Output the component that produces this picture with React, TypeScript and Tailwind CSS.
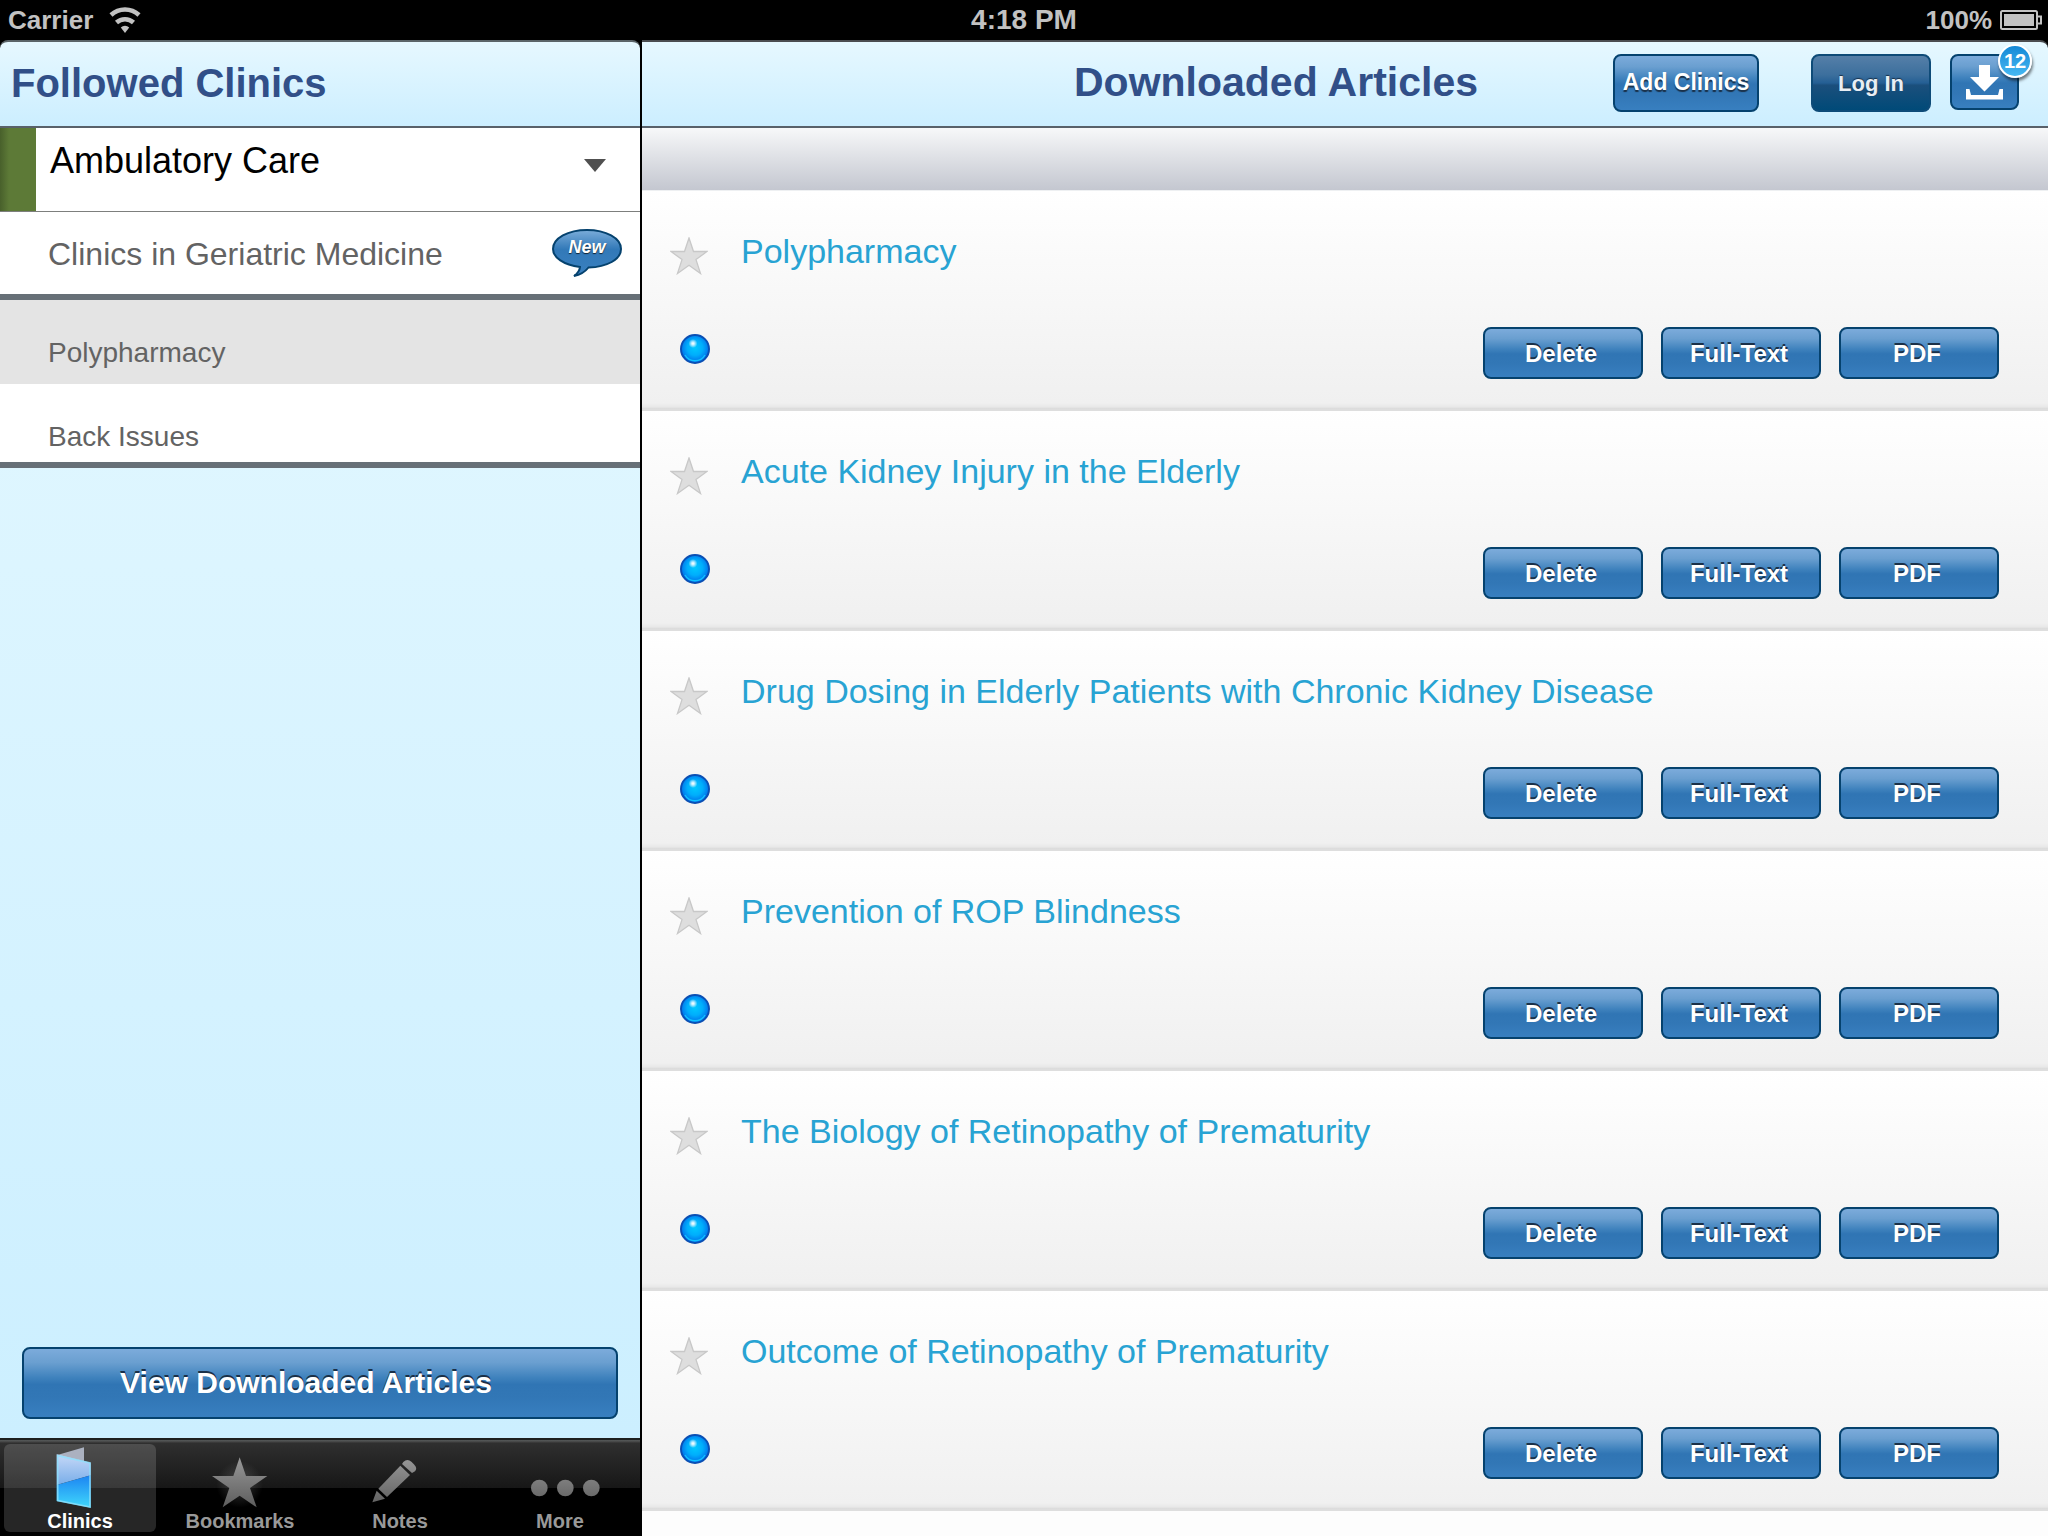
import React from "react";

const glossy =
  "border-2 border-[#05426e] bg-[linear-gradient(180deg,#7cabdb_0%,#6a9fd0_20%,#3f82bd_42%,#3075b4_52%,#3277b6_72%,#387fc0_100%)] font-bold text-white";

const articles = [
  "Polypharmacy",
  "Acute Kidney Injury in the Elderly",
  "Drug Dosing in Elderly Patients with Chronic Kidney Disease",
  "Prevention of ROP Blindness",
  "The Biology of Retinopathy of Prematurity",
  "Outcome of Retinopathy of Prematurity",
];

function WifiIcon() {
  return (
    <svg width="32" height="28" viewBox="0 0 32 28" fill="none" stroke="#c2c2c2" aria-hidden="true">
      <path d="M2 9a20.500 20.500 0 0 1 28 0" strokeWidth="4.500" />
      <path d="M7.500 16.500a12.500 12.500 0 0 1 17 0" strokeWidth="4.500" />
      <path d="M16 27l-4.200-5.600a6 6 0 0 1 8.400 0z" fill="#c2c2c2" stroke="none" />
    </svg>
  );
}

function BatteryIcon() {
  return (
    <svg width="42" height="20" viewBox="0 0 42 20" fill="none" aria-hidden="true">
      <rect x="1" y="1" width="36" height="18" rx="1.500" stroke="#c2c2c2" strokeWidth="2" />
      <rect x="4" y="4" width="30" height="12" fill="#c2c2c2" />
      <path d="M37 6.500h4v7h-4" stroke="#c2c2c2" strokeWidth="2" />
    </svg>
  );
}

function StatusBar() {
  return (
    <div className="grid h-10 shrink-0 grid-cols-3 items-center bg-black text-[26px] leading-7 font-bold text-[#c2c2c2]">
      <div className="flex items-center gap-4 pl-2">
        <span>Carrier</span>
        <WifiIcon />
      </div>
      <div className="text-center text-[28px]">4:18 PM</div>
      <div className="flex items-center justify-end gap-2 pr-1.5">
        <span>100%</span>
        <BatteryIcon />
      </div>
    </div>
  );
}

function NewBubble() {
  return (
    <span className="relative h-12 w-[70px] shrink-0">
      <svg className="absolute inset-0" width="70" height="48" viewBox="0 0 70 48" aria-hidden="true">
        <defs>
          <linearGradient id="bubble" x1="0" y1="0" x2="0" y2="1">
            <stop offset="0" stopColor="#7badda" />
            <stop offset="0.42" stopColor="#3279b8" />
            <stop offset="1" stopColor="#3a80c0" />
          </linearGradient>
        </defs>
        <path
          d="M35 1C16 1 1 9.300 1 20c0 8.500 10.500 15.800 27 18-.4 3.600-2.500 6.600-6 9 6.500-1.200 11.200-4.300 14.500-8.500C55 38 69 30.500 69 20 69 9.300 54 1 35 1z"
          fill="url(#bubble)"
          stroke="#05426e"
          strokeWidth="2"
        />
      </svg>
      <span className="relative block pt-2 text-center text-[18px] leading-5 font-bold text-white italic [text-shadow:0_1px_1px_#123]">
        New
      </span>
    </span>
  );
}

const tabViews: Record<string, string> = {
  Clinics: "120 24 240 192",
  Bookmarks: "600 24 240 192",
  Notes: "120 24 240 192",
  More: "600 24 240 192",
};

function TabIcon({ name }: { name: string }) {
  return (
    <svg className="shrink-0" width="80" height="64" viewBox={tabViews[name]} aria-hidden="true">
      <defs>
        <linearGradient id="tabGrey" gradientUnits="userSpaceOnUse" x1="0" y1="60" x2="0" y2="216">
          <stop offset="0" stopColor="#9a9a9a" />
          <stop offset="1" stopColor="#5c5c5c" />
        </linearGradient>
        <linearGradient id="folderTop" x1="0" y1="0" x2="0" y2="1">
          <stop offset="0" stopColor="#c5d8f8" />
          <stop offset="1" stopColor="#78ade8" />
        </linearGradient>
        <linearGradient id="folderBottom" x1="0" y1="0" x2="0" y2="1">
          <stop offset="0" stopColor="#1c84f2" />
          <stop offset="1" stopColor="#40d8fb" />
        </linearGradient>
        <radialGradient id="starGlow">
          <stop offset="0" stopColor="#888" stopOpacity="0.4" />
          <stop offset="1" stopColor="#888" stopOpacity="0" />
        </radialGradient>
      </defs>
      {name === "Clinics" && (
        <g>
          <path d="M172 57L252 34V76L190 62z" fill="#abb1c0" />
          <path d="M170 55L272 80V118L170 147z" fill="url(#folderTop)" />
          <path d="M170 147L272 118V215L170 195z" fill="url(#folderBottom)" />
          <path d="M173 59V194L270 213V81z" fill="none" stroke="#8fe0fb" strokeWidth="5" strokeOpacity="0.8" />
        </g>
      )}
      {name === "Bookmarks" && (
        <g>
          <circle cx="719" cy="145" r="70" fill="url(#starGlow)" />
          <path
            d="M719 64L738 120H802L750 156L770 214L719 179L668 214L688 156L636 120H700z"
            fill="url(#tabGrey)"
          />
        </g>
      )}
      {name === "Notes" && (
        <g fill="url(#tabGrey)">
          <path d="M250 78Q262 66 275 78L283 86Q293 96 285 106L276 111L246 84z" />
          <path d="M241 89L270 117L201 183L175 158z" />
          <path d="M170 164L195 188L157 199z" />
        </g>
      )}
      {name === "More" && (
        <g fill="url(#tabGrey)">
          <circle cx="658" cy="156" r="25" />
          <circle cx="736" cy="156" r="25" />
          <circle cx="814" cy="156" r="25" />
        </g>
      )}
    </svg>
  );
}

function TabBar() {
  return (
    <nav className="grid shrink-0 grid-cols-4 border-t-2 border-[#1c1f1f] bg-[linear-gradient(180deg,#565a5a_0px,#444_2px,#2f2f2f_3px,#171717_48px,#000_48px)] pt-1 pb-1">
      {["Clinics", "Bookmarks", "Notes", "More"].map((name, i) => (
        <button
          key={name}
          className={
            i === 0
              ? "mx-1 flex h-[88px] flex-col items-center rounded-md bg-white/15 text-white"
              : "mx-1 flex h-[88px] flex-col items-center rounded-md text-[#999]"
          }
        >
          <TabIcon name={name} />
          <span className="pt-px text-[20px] leading-6 font-bold">{name}</span>
        </button>
      ))}
    </nav>
  );
}

function Sidebar() {
  return (
    <aside className="flex w-[642px] shrink-0 flex-col border-r-2 border-black bg-black">
      <header className="flex h-[88px] shrink-0 items-center rounded-t-lg border-y-2 border-t-[#5b6468] border-b-[#59616a] bg-linear-to-b from-[#e6f8ff] to-[#cceeff] pb-0.5 pl-[11px]">
        <h1 className="text-[40px] leading-12 font-bold text-[#314f88]">Followed Clinics</h1>
      </header>
      <div className="flex min-h-0 flex-1 flex-col bg-linear-to-b from-[#e4f8ff] to-[#ccefff]">
        <button className="flex h-[84px] shrink-0 border-b border-[#7d7f7d] bg-white text-left">
          <span className="w-9 self-stretch bg-linear-to-r from-[#48602b] to-[#5d7a37] to-25%" />
          <span className="flex-1 pt-[13px] pl-3.5 text-[36px] leading-10 text-black">Ambulatory Care</span>
          <svg className="mt-[31px] mr-[34px]" width="22" height="13" viewBox="0 0 22 13" aria-hidden="true">
            <path d="M0 0h22L11 13z" fill="#505050" />
          </svg>
        </button>
        <button className="flex h-[88px] shrink-0 justify-between border-b-6 border-[#677077] bg-white pt-[17px] pr-[18px] pl-12 text-left">
          <span className="pt-[5px] text-[32px] leading-10 text-[#636363]">Clinics in Geriatric Medicine</span>
          <NewBubble />
        </button>
        <button className="flex h-[84px] shrink-0 items-end bg-[#e4e4e4] pb-[15px] pl-12 text-left text-[28px] leading-8 text-[#636363]">
          Polypharmacy
        </button>
        <button className="flex h-[84px] shrink-0 items-end border-b-6 border-[#677077] bg-white pb-[9px] pl-12 text-left text-[28px] leading-8 text-[#636363]">
          Back Issues
        </button>
        <div className="mt-auto px-[22px] pb-[19px]">
          <button
            className={`${glossy} h-[72px] w-full rounded-lg pr-7 text-[30px] leading-9 [text-shadow:0_-2px_0_#1a3048]`}
          >
            View Downloaded Articles
          </button>
        </div>
      </div>
      <TabBar />
    </aside>
  );
}

function ArticleRow({ title }: { title: string }) {
  return (
    <li className="flex h-[220px] shrink-0 flex-col justify-between border-b-2 border-[#dedede] bg-[linear-gradient(180deg,#fff_0px,#f0f0f0_212px,#e8e8e8_216px,#d9d9d9_218px)] pt-10 pr-[49px] pb-[30px] pl-7">
      <div className="flex gap-[33px]">
        <button aria-label="Bookmark article" className="pt-1.5">
          <svg width="38" height="38" viewBox="0 0 38 38" aria-hidden="true">
            <path
              d="M19 1L23.500 14.500H37L26 22.600L30.500 36.500L19 28.200L7.500 36.500L12 22.600L1 14.500H14.500z"
              fill="#dedede"
              stroke="#c8c8c8"
              strokeWidth="1.300"
            />
          </svg>
        </button>
        <h3>
          <a href="#article" className="text-[34px] leading-10 text-[#28a3d3]">
            {title}
          </a>
        </h3>
      </div>
      <div className="flex items-center gap-[18px] pl-2.5">
        <svg className="mr-auto mb-2" width="30" height="30" viewBox="0 0 30 30" aria-hidden="true">
          <defs>
            <radialGradient id="orb" cx="0.5" cy="0.45" r="0.55">
              <stop offset="0" stopColor="#00c8ff" />
              <stop offset="0.5" stopColor="#00aefc" />
              <stop offset="1" stopColor="#0068e8" />
            </radialGradient>
            <radialGradient id="shine">
              <stop offset="0" stopColor="#fff" />
              <stop offset="0.3" stopColor="#fff" stopOpacity="0.8" />
              <stop offset="1" stopColor="#fff" stopOpacity="0" />
            </radialGradient>
          </defs>
          <circle cx="15" cy="15" r="14" fill="url(#orb)" stroke="#0a4fb4" strokeWidth="2" />
          <path d="M5 21a11.500 11.500 0 0 0 20 0" fill="none" stroke="#10c0ff" strokeWidth="1.500" />
          <circle cx="13" cy="9.500" r="4.500" fill="url(#shine)" />
        </svg>
        {["Delete", "Full-Text", "PDF"].map((label) => (
          <button
            key={label}
            className={`${glossy} h-[52px] w-40 rounded-lg pt-0.5 pr-1 text-[24px] leading-8 [text-shadow:0_-2px_0_#1a3048]`}
          >
            {label}
          </button>
        ))}
      </div>
    </li>
  );
}

function Articles() {
  return (
    <main className="flex min-w-0 flex-1 flex-col bg-black">
      <header className="flex h-[88px] shrink-0 items-start justify-end rounded-tr-lg border-y-2 border-t-[#4b4d50] border-b-[#59616a] bg-linear-to-b from-[#e6f8ff] to-[#cceeff] pt-3 pr-[29px]">
        <h2 className="mr-[135px] pt-1 text-[41px] leading-12 font-bold text-[#314f88]">Downloaded Articles</h2>
        <button
          className={`${glossy} mr-[52px] h-[58px] w-[146px] rounded-lg pb-0.5 text-[23px] leading-8 whitespace-nowrap [text-shadow:0_2px_1px_#1a3048]`}
        >
          Add Clinics
        </button>
        <button className="mr-[19px] h-[58px] w-[120px] rounded-lg border-2 border-[#0e4b78] bg-[linear-gradient(180deg,#557fa8_0%,#3c6f9d_35%,#245f94_50%,#1b4f7c_54%,#004a78_100%)] pt-0.5 text-[22px] leading-8 font-bold text-[#e8eef4] [text-shadow:0_-1px_1px_#1a3048]">
          Log In
        </button>
        <button aria-label="Downloads, 12 items" className={`${glossy} relative h-14 w-[69px] rounded-lg`}>
          <svg className="mx-auto" width="37" height="35" viewBox="0 0 37 35" aria-hidden="true">
            <path d="M13 0h11v12h9L18.500 26.500L4 12h9z" fill="#fff" />
            <path d="M0 24h3.500l1.500 6h27l1.500-6H37v10.500H0z" fill="#fff" />
          </svg>
          <span className="absolute -top-3 -right-[15px] flex size-[34px] items-center justify-center rounded-full border-2 border-white bg-linear-to-b from-[#1389d6] to-[#45b8f2] text-[20px] leading-6 shadow-[1px_3px_3px_rgba(0,0,0,0.5)]">
            12
          </span>
        </button>
      </header>
      <div className="h-[63px] shrink-0 border-b border-[#eef0f2] bg-linear-to-b from-[#f7f8f9] to-[#c4c7d0]" />
      <ul className="flex min-h-0 flex-1 flex-col overflow-hidden bg-[#fdfdfd]">
        {articles.map((title) => (
          <ArticleRow key={title} title={title} />
        ))}
      </ul>
    </main>
  );
}

export default function App() {
  return (
    <div className="flex h-screen flex-col overflow-hidden bg-black font-['Liberation_Sans',Arial,sans-serif]">
      <StatusBar />
      <div className="flex min-h-0 flex-1">
        <Sidebar />
        <Articles />
      </div>
    </div>
  );
}
